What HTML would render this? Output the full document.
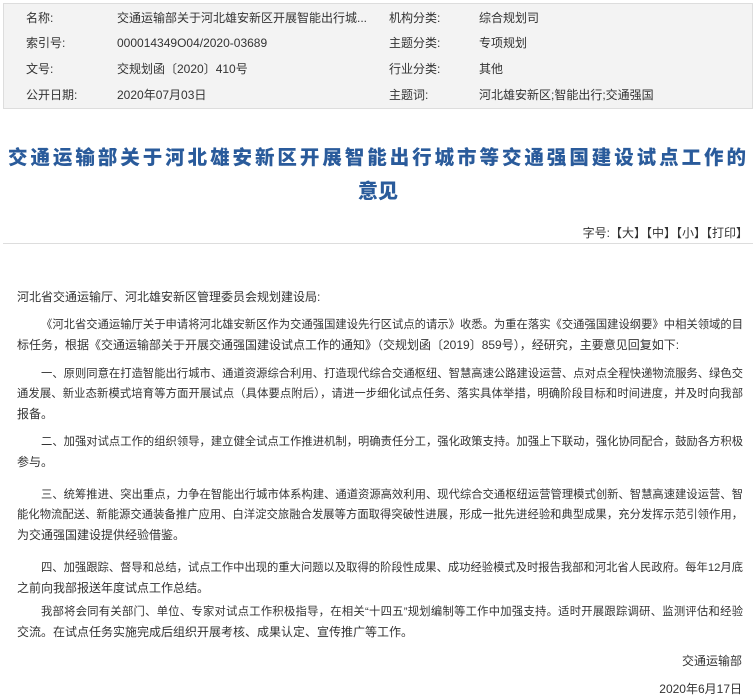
<!DOCTYPE html>
<html><head><meta charset="utf-8"><style>
*{margin:0;padding:0;box-sizing:border-box}
body{width:756px;height:696px;background:#fff;font-family:"Liberation Sans","Noto Sans CJK SC",sans-serif;color:#333;font-size:12px;position:relative;overflow:hidden}
.box{position:absolute;left:3px;top:3px;width:750px;height:106px;background:#f3f3f3;border:1px solid #ddd}
.c{position:absolute;white-space:nowrap;line-height:16px}
.t{position:absolute;font-size:20px;line-height:34px;color:#2a5b9b;font-weight:900;font-family:"Noto Sans CJK SC",sans-serif;white-space:nowrap}
.tool{position:absolute;right:8px;top:225px;line-height:16px}
.hr{position:absolute;left:3px;top:243px;width:750px;border-top:1px solid #ddd}
p{position:absolute;left:17px;width:726px;line-height:20px}
p span{display:block;text-align:justify;text-align-last:justify;text-justify:inter-character;white-space:nowrap;font-size:11.3px}
p span.f{padding-left:24px}
p span.l{text-align-last:left;font-size:12px}
.r{text-align:right;left:17px;width:725px}
</style></head><body>
<div class="box"></div>
<div class="c" style="left:26px;top:10px">名称:</div><div class="c" style="left:117px;top:10px">交通运输部关于河北雄安新区开展智能出行城...</div>
<div class="c" style="left:389px;top:10px">机构分类:</div><div class="c" style="left:479px;top:10px">综合规划司</div>
<div class="c" style="left:26px;top:35px">索引号:</div><div class="c" style="left:117px;top:35px">000014349O04/2020-03689</div>
<div class="c" style="left:389px;top:35px">主题分类:</div><div class="c" style="left:479px;top:35px">专项规划</div>
<div class="c" style="left:26px;top:61px">文号:</div><div class="c" style="left:117px;top:61px">交规划函〔2020〕410号</div>
<div class="c" style="left:389px;top:61px">行业分类:</div><div class="c" style="left:479px;top:61px">其他</div>
<div class="c" style="left:26px;top:87px">公开日期:</div><div class="c" style="left:117px;top:87px">2020年07月03日</div>
<div class="c" style="left:389px;top:87px">主题词:</div><div class="c" style="left:479px;top:87px">河北雄安新区;智能出行;交通强国</div>
<div class="t" style="left:8px;top:139px;width:738px;text-align:justify;text-align-last:justify;font-size:19.5px">交通运输部关于河北雄安新区开展智能出行城市等交通强国建设试点工作的</div>
<div class="t" style="left:0;top:173px;width:756px;text-align:center">意见</div>
<div class="tool">字号:【大】【中】【小】【打印】</div>
<div class="hr"></div>
<p style="top:287px"><span class="l">河北省交通运输厅、河北雄安新区管理委员会规划建设局:</span></p>
<p style="top:315px"><span class="f">《河北省交通运输厅关于申请将河北雄安新区作为交通强国建设先行区试点的请示》收悉。为重在落实《交通强国建设纲要》中相关领域的目</span><span class="l">标任务，根据《交通运输部关于开展交通强国建设试点工作的通知》（交规划函〔2019〕859号），经研究，主要意见回复如下:</span></p>
<p style="top:364px"><span class="f">一、原则同意在打造智能出行城市、通道资源综合利用、打造现代综合交通枢纽、智慧高速公路建设运营、点对点全程快递物流服务、绿色交</span><span>通发展、新业态新模式培育等方面开展试点（具体要点附后），请进一步细化试点任务、落实具体举措，明确阶段目标和时间进度，并及时向我部</span><span class="l">报备。</span></p>
<p style="top:432px"><span class="f">二、加强对试点工作的组织领导，建立健全试点工作推进机制，明确责任分工，强化政策支持。加强上下联动，强化协同配合，鼓励各方积极</span><span class="l">参与。</span></p>
<p style="top:485px"><span class="f">三、统筹推进、突出重点，力争在智能出行城市体系构建、通道资源高效利用、现代综合交通枢纽运营管理模式创新、智慧高速建设运营、智</span><span>能化物流配送、新能源交通装备推广应用、白洋淀交旅融合发展等方面取得突破性进展，形成一批先进经验和典型成果，充分发挥示范引领作用，</span><span class="l">为交通强国建设提供经验借鉴。</span></p>
<p style="top:558px"><span class="f">四、加强跟踪、督导和总结，试点工作中出现的重大问题以及取得的阶段性成果、成功经验模式及时报告我部和河北省人民政府。每年12月底</span><span class="l">之前向我部报送年度试点工作总结。</span></p>
<p style="top:602px"><span class="f">我部将会同有关部门、单位、专家对试点工作积极指导，在相关“十四五”规划编制等工作中加强支持。适时开展跟踪调研、监测评估和经验</span><span class="l">交流。在试点任务实施完成后组织开展考核、成果认定、宣传推广等工作。</span></p>
<p class="r" style="top:651px">交通运输部</p>
<p class="r" style="top:679px">2020年6月17日</p>
</body></html>
